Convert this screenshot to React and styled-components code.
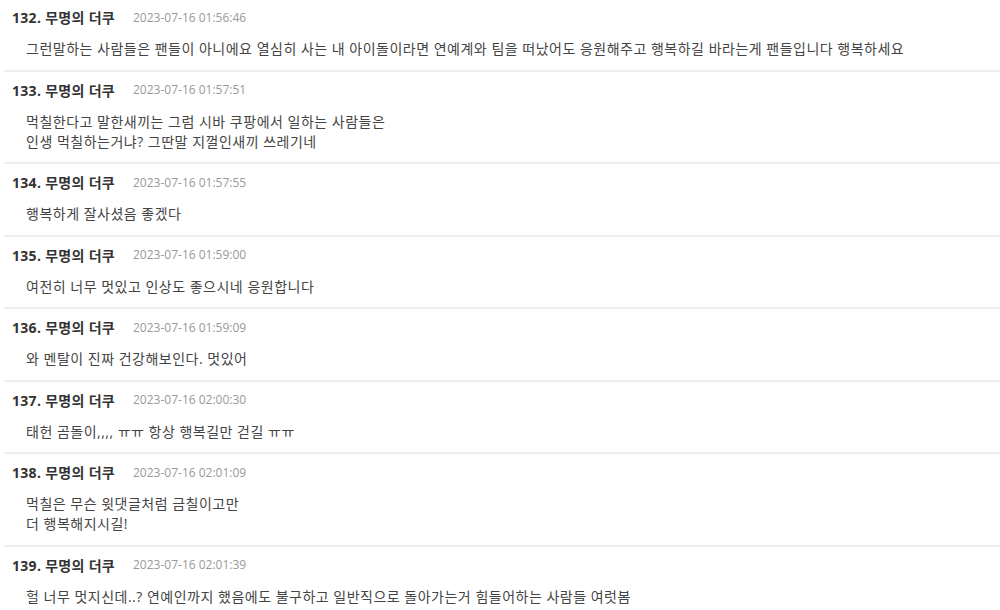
import React from "react";
import styled, { createGlobalStyle } from "styled-components";

const GlobalStyle = createGlobalStyle`
  body {
    margin: 0;
    background: #fff;
    font-family: "Open Sans", "Noto Sans CJK KR", sans-serif;
    overflow: hidden;
  }
`;

const comments = [
  {
    no: 132,
    time: "2023-07-16 01:56:46",
    lines: [
      "그런말하는 사람들은 팬들이 아니에요 열심히 사는 내 아이돌이라면 연예계와 팀을 떠났어도 응원해주고 행복하길 바라는게 팬들입니다 행복하세요",
    ],
  },
  {
    no: 133,
    time: "2023-07-16 01:57:51",
    lines: [
      "먹칠한다고 말한새끼는 그럼 시바 쿠팡에서 일하는 사람들은",
      "인생 먹칠하는거냐? 그딴말 지껄인새끼 쓰레기네",
    ],
  },
  { no: 134, time: "2023-07-16 01:57:55", lines: ["행복하게 잘사셨음 좋겠다"] },
  {
    no: 135,
    time: "2023-07-16 01:59:00",
    lines: ["여전히 너무 멋있고 인상도 좋으시네 응원합니다"],
  },
  {
    no: 136,
    time: "2023-07-16 01:59:09",
    lines: ["와 멘탈이 진짜 건강해보인다. 멋있어"],
  },
  {
    no: 137,
    time: "2023-07-16 02:00:30",
    lines: ["태헌 곰돌이,,,, ㅠㅠ 항상 행복길만 걷길 ㅠㅠ"],
  },
  {
    no: 138,
    time: "2023-07-16 02:01:09",
    lines: ["먹칠은 무슨 윗댓글처럼 금칠이고만", "더 행복해지시길!"],
  },
  {
    no: 139,
    time: "2023-07-16 02:01:39",
    lines: [
      "헐 너무 멋지신데..? 연예인까지 했음에도 불구하고 일반직으로 돌아가는거 힘들어하는 사람들 여럿봄",
    ],
  },
];

const App = () => {
  return (
    <>
      <GlobalStyle />
      <List>
        {comments.map((c) => (
          <Item key={c.no}>
            <Header>
              <Author>{c.no}. 무명의 더쿠</Author>
              <Time>{c.time}</Time>
            </Header>
            <Body>
              {c.lines.map((l, i) => (
                <Line key={i}>{l}</Line>
              ))}
            </Body>
          </Item>
        ))}
      </List>
    </>
  );
};

export default App;

const List = styled.ul`
  list-style: none;
  margin: -1px 0 0 4px;
  padding: 0;
`;

const Item = styled.li`
  padding: 8px 0 10.5px 8px;
  border-bottom: solid 2px #eeeeee;
`;

const Header = styled.div`
  display: flex;
  align-items: center;
  gap: 18px;
  height: 20px;
`;

const Author = styled.span`
  font-size: 14px;
  font-weight: 700;
  letter-spacing: 0.3px;
  color: #333;
`;

const Time = styled.span`
  font-size: 12px;
  color: #999;
`;

const Body = styled.div`
  margin-top: 12px;
  padding-left: 14px;
  font-size: 14px;
  letter-spacing: 0.5px;
  line-height: 20px;
  color: #444;
`;

const Line = styled.div`
  white-space: nowrap;
`;
